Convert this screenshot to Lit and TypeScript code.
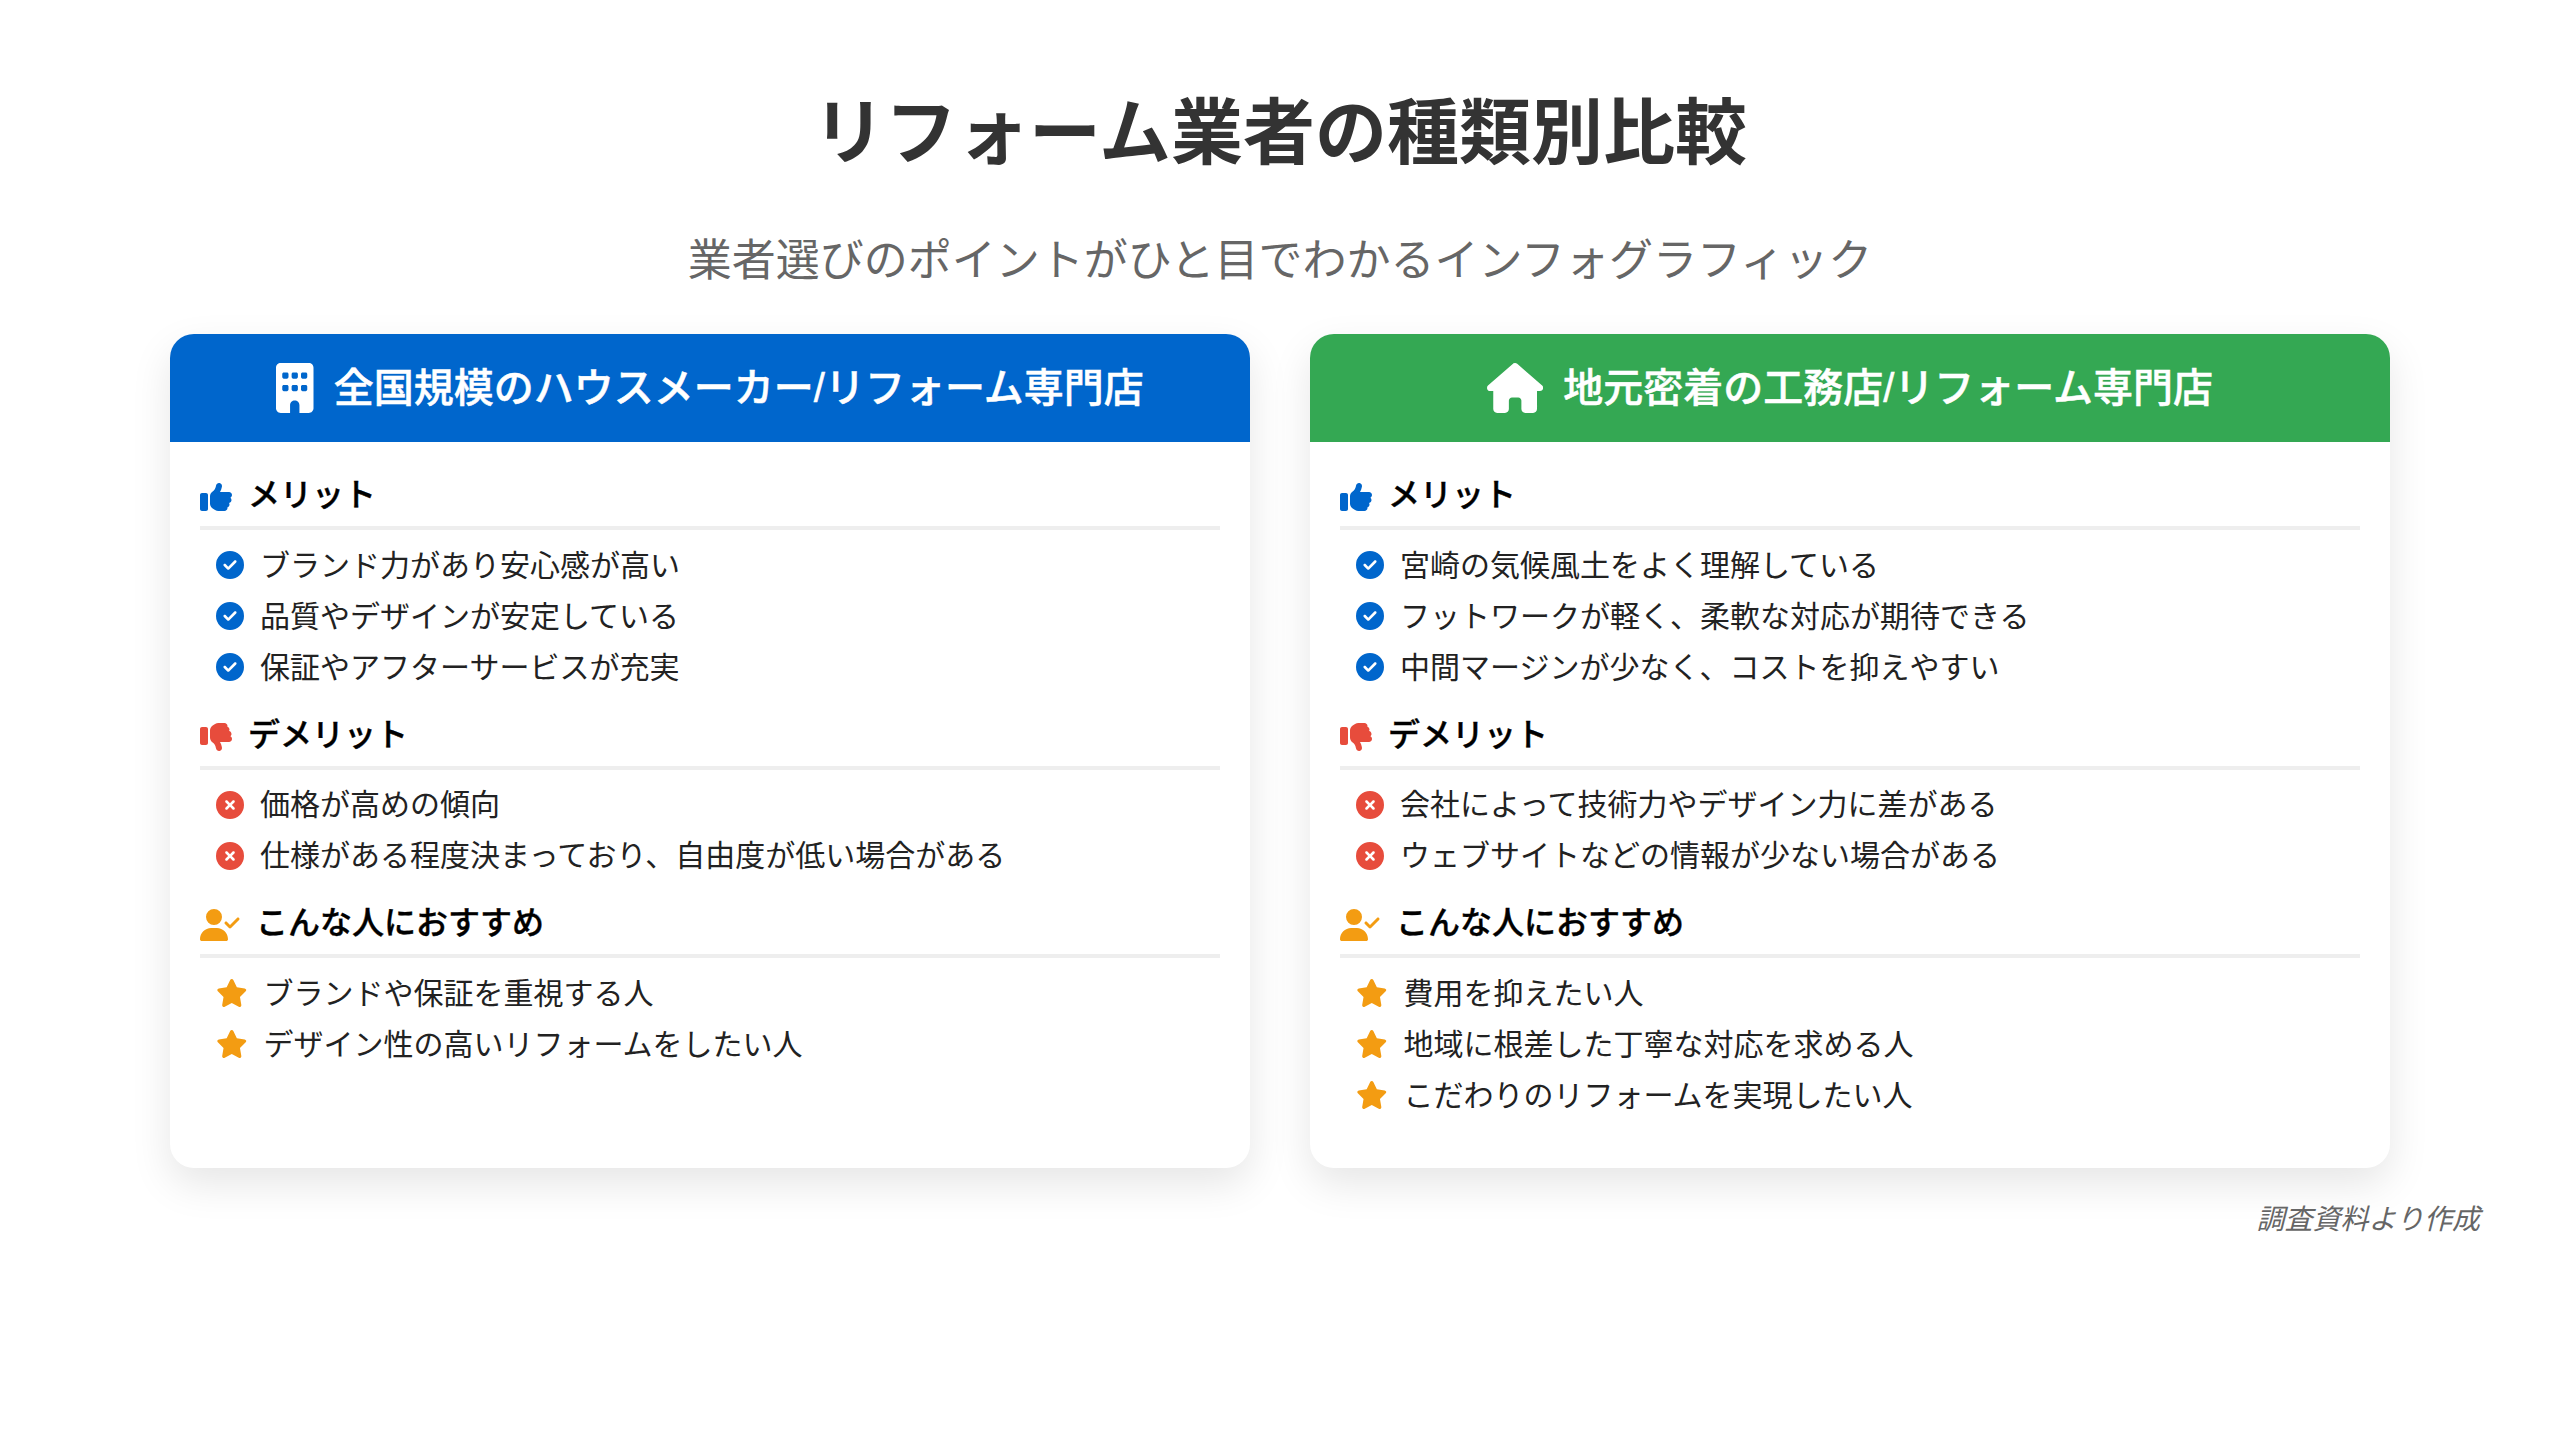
import { LitElement, html, css, svg } from "lit";
import { customElement } from "lit/decorators.js";

const P = {
  building: ["0 0 384 512", "M48 0C21.5 0 0 21.5 0 48V464c0 26.5 21.5 48 48 48h96V432c0-26.5 21.5-48 48-48s48 21.5 48 48v80h96c26.5 0 48-21.5 48-48V48c0-26.5-21.5-48-48-48H48zM64 240c0-8.8 7.2-16 16-16h32c8.8 0 16 7.2 16 16v32c0 8.8-7.2 16-16 16H80c-8.8 0-16-7.2-16-16V240zm112-16h32c8.8 0 16 7.2 16 16v32c0 8.8-7.2 16-16 16H176c-8.8 0-16-7.2-16-16V240c0-8.8 7.2-16 16-16zm80 16c0-8.8 7.2-16 16-16h32c8.8 0 16 7.2 16 16v32c0 8.8-7.2 16-16 16H272c-8.8 0-16-7.2-16-16V240zM80 96h32c8.8 0 16 7.2 16 16v32c0 8.8-7.2 16-16 16H80c-8.8 0-16-7.2-16-16V112c0-8.8 7.2-16 16-16zm80 16c0-8.8 7.2-16 16-16h32c8.8 0 16 7.2 16 16v32c0 8.8-7.2 16-16 16H176c-8.8 0-16-7.2-16-16V112zM272 96h32c8.8 0 16 7.2 16 16v32c0 8.8-7.2 16-16 16H272c-8.8 0-16-7.2-16-16V112c0-8.8 7.2-16 16-16z"],
  house: ["0 0 576 512", "M575.8 255.5c0 18-15 32.1-32 32.1h-32l.7 160.2c0 2.7-.2 5.4-.5 8.1V472c0 22.1-17.9 40-40 40H456c-1.1 0-2.2 0-3.3-.1c-1.4 .1-2.8 .1-4.2 .1H416 392c-22.1 0-40-17.9-40-40V448 384c0-17.7-14.3-32-32-32H256c-17.7 0-32 14.3-32 32v64 24c0 22.1-17.9 40-40 40H160 128.1c-1.5 0-3-.1-4.5-.2c-1.2 .1-2.4 .2-3.6 .2H104c-22.1 0-40-17.9-40-40V360c0-.9 0-1.9 .1-2.8V287.6H32c-18 0-32-14-32-32.1c0-9 3-17 10-24L266.4 8c7-7 15-8 22-8s15 2 21 7L564.8 231.5c8 7 12 15 11 24z"],
  up: ["0 0 512 512", "M313.4 32.9c26 5.2 42.9 30.5 37.7 56.5l-2.3 11.4c-5.3 26.7-15.1 52.1-28.8 75.2H464c26.5 0 48 21.5 48 48c0 18.5-10.5 34.6-25.9 42.6C497 275.4 504 288.9 504 304c0 23.4-16.8 42.9-38.9 47.1c4.4 7.3 6.9 15.8 6.9 24.9c0 21.3-13.9 39.4-33.1 45.6c.7 3.3 1.1 6.8 1.1 10.4c0 26.5-21.5 48-48 48H294.5c-19 0-37.5-5.6-53.3-16.1l-38.5-25.7C176 420.4 160 390.4 160 358.3V320 272 247.1c0-29.2 13.3-56.7 36-75l7.4-5.9c26.5-21.2 44.6-51 51.2-84.2l2.3-11.4c5.2-26 30.5-42.9 56.5-37.7zM32 192H96c17.7 0 32 14.3 32 32V448c0 17.7-14.3 32-32 32H32c-17.7 0-32-14.3-32-32V224c0-17.7 14.3-32 32-32z"],
  down: ["0 0 512 512", "M313.4 479.1c26-5.2 42.9-30.5 37.7-56.5l-2.3-11.4c-5.3-26.7-15.1-52.1-28.8-75.2H464c26.5 0 48-21.5 48-48c0-18.5-10.5-34.6-25.9-42.6C497 236.6 504 223.1 504 208c0-23.4-16.8-42.9-38.9-47.1c4.4-7.3 6.9-15.8 6.9-24.9c0-21.3-13.9-39.4-33.1-45.6c.7-3.3 1.1-6.8 1.1-10.4c0-26.5-21.5-48-48-48H294.5c-19 0-37.5 5.6-53.3 16.1L202.7 73.8C176 91.6 160 121.6 160 153.7V192v48 24.9c0 29.2 13.3 56.7 36 75l7.4 5.9c26.5 21.2 44.6 51 51.2 84.2l2.3 11.4c5.2 26 30.5 42.9 56.5 37.7zM32 384H96c17.7 0 32-14.3 32-32V128c0-17.7-14.3-32-32-32H32C14.3 96 0 110.3 0 128V352c0 17.7 14.3 32 32 32z"],
  user: ["0 0 640 512", "M96 128a128 128 0 1 1 256 0A128 128 0 1 1 96 128zM0 482.3C0 383.8 79.8 304 178.3 304h91.4C368.2 304 448 383.8 448 482.3c0 16.4-13.3 29.7-29.7 29.7H29.7C13.3 512 0 498.7 0 482.3zM625 177L497 305c-9.4 9.4-24.6 9.4-33.9 0l-64-64c-9.4-9.4-9.4-24.6 0-33.9s24.6-9.4 33.9 0l47 47L591 143c9.4-9.4 24.6-9.4 33.9 0s9.4 24.6 0 33.9z"],
  star: ["0 0 576 512", "M316.9 18C311.6 7 300.4 0 288.1 0s-23.4 7-28.8 18L195 150.3 51.4 171.5c-12 1.8-22 10.2-25.7 21.7s-.7 24.2 7.9 32.7L137.8 329 113.2 474.7c-2 12 3 24.2 12.9 31.3s23 8 33.8 2.3l128.3-68.5 128.3 68.5c10.8 5.7 23.9 4.9 33.8-2.3s14.9-19.3 12.9-31.3L438.5 329 542.7 225.9c8.6-8.5 11.7-21.2 7.9-32.7s-13.7-19.9-25.7-21.7L381.2 150.3 316.9 18z"],
  check: ["0 0 512 512", "M256 512A256 256 0 1 0 256 0a256 256 0 1 0 0 512zM369 209L241 337c-9.4 9.4-24.6 9.4-33.9 0l-64-64c-9.4-9.4-9.4-24.6 0-33.9s24.6-9.4 33.9 0l47 47L335 175c9.4-9.4 24.6-9.4 33.9 0s9.4 24.6 0 33.9z"],
  xmark: ["0 0 512 512", "M256 512A256 256 0 1 0 256 0a256 256 0 1 0 0 512zM175 175c9.4-9.4 24.6-9.4 33.9 0l47 47 47-47c9.4-9.4 24.6-9.4 33.9 0s9.4 24.6 0 33.9l-47 47 47 47c9.4 9.4 9.4 24.6 0 33.9s-24.6 9.4-33.9 0l-47-47-47 47c-9.4 9.4-24.6 9.4-33.9 0s-9.4-24.6 0-33.9l47-47-47-47c-9.4-9.4-9.4-24.6 0-33.9z"],
} as const;

type IconName = keyof typeof P;
const icon = (n: IconName, cls: string) =>
  html`<svg class=${cls} viewBox=${P[n][0]} fill="currentColor">${svg`<path d=${P[n][1]}></path>`}</svg>`;

interface Sec { head: string; hi: IconName; hc: string; ii: IconName; ic: string; items: string[] }
interface Card { title: string; i: IconName; c: string; secs: Sec[] }

const sec = (kind: "m" | "d" | "r", items: string[]): Sec =>
  kind === "m"
    ? { head: "メリット", hi: "up", hc: "blue", ii: "check", ic: "blue", items }
    : kind === "d"
    ? { head: "デメリット", hi: "down", hc: "red", ii: "xmark", ic: "red", items }
    : { head: "こんな人におすすめ", hi: "user", hc: "orange", ii: "star", ic: "orange", items };

const cards: Card[] = [
  {
    title: "全国規模のハウスメーカー/リフォーム専門店", i: "building", c: "hblue",
    secs: [
      sec("m", ["ブランド力があり安心感が高い", "品質やデザインが安定している", "保証やアフターサービスが充実"]),
      sec("d", ["価格が高めの傾向", "仕様がある程度決まっており、自由度が低い場合がある"]),
      sec("r", ["ブランドや保証を重視する人", "デザイン性の高いリフォームをしたい人"]),
    ],
  },
  {
    title: "地元密着の工務店/リフォーム専門店", i: "house", c: "hgreen",
    secs: [
      sec("m", ["宮崎の気候風土をよく理解している", "フットワークが軽く、柔軟な対応が期待できる", "中間マージンが少なく、コストを抑えやすい"]),
      sec("d", ["会社によって技術力やデザイン力に差がある", "ウェブサイトなどの情報が少ない場合がある"]),
      sec("r", ["費用を抑えたい人", "地域に根差した丁寧な対応を求める人", "こだわりのリフォームを実現したい人"]),
    ],
  },
];

@customElement("app-root")
export class AppRoot extends LitElement {
  static styles = css`
    :host {
      display: block;
      width: 2560px;
      height: 1440px;
      background: #fff;
      font-family: "Liberation Sans", "Noto Sans CJK JP", sans-serif;
      color: #222;
    }
    .page { padding: 83px 80px 0; box-sizing: border-box; height: 100%; display: flex; flex-direction: column; }
    h1 { margin: 0; font-size: 72px; font-weight: 700; line-height: 100px; color: #333; text-align: center; }
    .sub { margin: 43px 0 0; font-size: 44px; font-weight: 400; line-height: 70px; color: #666; text-align: center; }
    .cards { display: flex; gap: 60px; justify-content: center; margin-top: 38px; }
    .card { width: 1080px; height: 834px; border-radius: 24px; background: #fff; overflow: hidden;
      box-shadow: 0 16px 40px rgba(0,0,0,.1); }
    .head { height: 108px; display: flex; align-items: center; justify-content: center; gap: 20px; color: #fff;
      font-size: 40px; font-weight: 500; -webkit-text-stroke: 0.5px #fff; }
    .head span { padding-bottom: 7px; }
    .hblue { background: #0066cc; }
    .hgreen { background: #34a853; }
    .hi { height: 50px; display: block; }
    .body { padding: 28px 30px 0; }
    .stitle { display: flex; align-items: center; gap: 16px; font-size: 32px; font-weight: 500; line-height: 50px; color: #000;
      padding-bottom: 6px; border-bottom: 4px solid #eee; -webkit-text-stroke: 0.4px #000; }
    .si { height: 32px; display: block; flex: none; position: relative; top: 2px; }
    ul { list-style: none; margin: 0; padding: 9.5px 0 17px 16px; }
    li { display: flex; align-items: center; gap: 16px; font-size: 30px; line-height: 51px; color: #222; }
    .ii { height: 28px; display: block; flex: none; }
    .blue { color: #0066cc; }
    .red { color: #e74c3c; }
    .orange { color: #f39c12; }
    .foot { margin-top: 32px; text-align: right; font-size: 28px; line-height: 40px; font-style: italic; color: #666; }
  `;

  render() {
    return html`<div class="page">
      <h1>リフォーム業者の種類別比較</h1>
      <p class="sub">業者選びのポイントがひと目でわかるインフォグラフィック</p>
      <div class="cards">
        ${cards.map(
          (c) => html`<section class="card">
            <div class="head ${c.c}">${icon(c.i, "hi")}<span>${c.title}</span></div>
            <div class="body">
              ${c.secs.map(
                (s) => html`<div class="stitle">${icon(s.hi, `si ${s.hc}`)}<span>${s.head}</span></div>
                  <ul>${s.items.map((t) => html`<li>${icon(s.ii, `ii ${s.ic}`)}<span>${t}</span></li>`)}</ul>`
              )}
            </div>
          </section>`
        )}
      </div>
      <div class="foot">調査資料より作成</div>
    </div>`;
  }
}
